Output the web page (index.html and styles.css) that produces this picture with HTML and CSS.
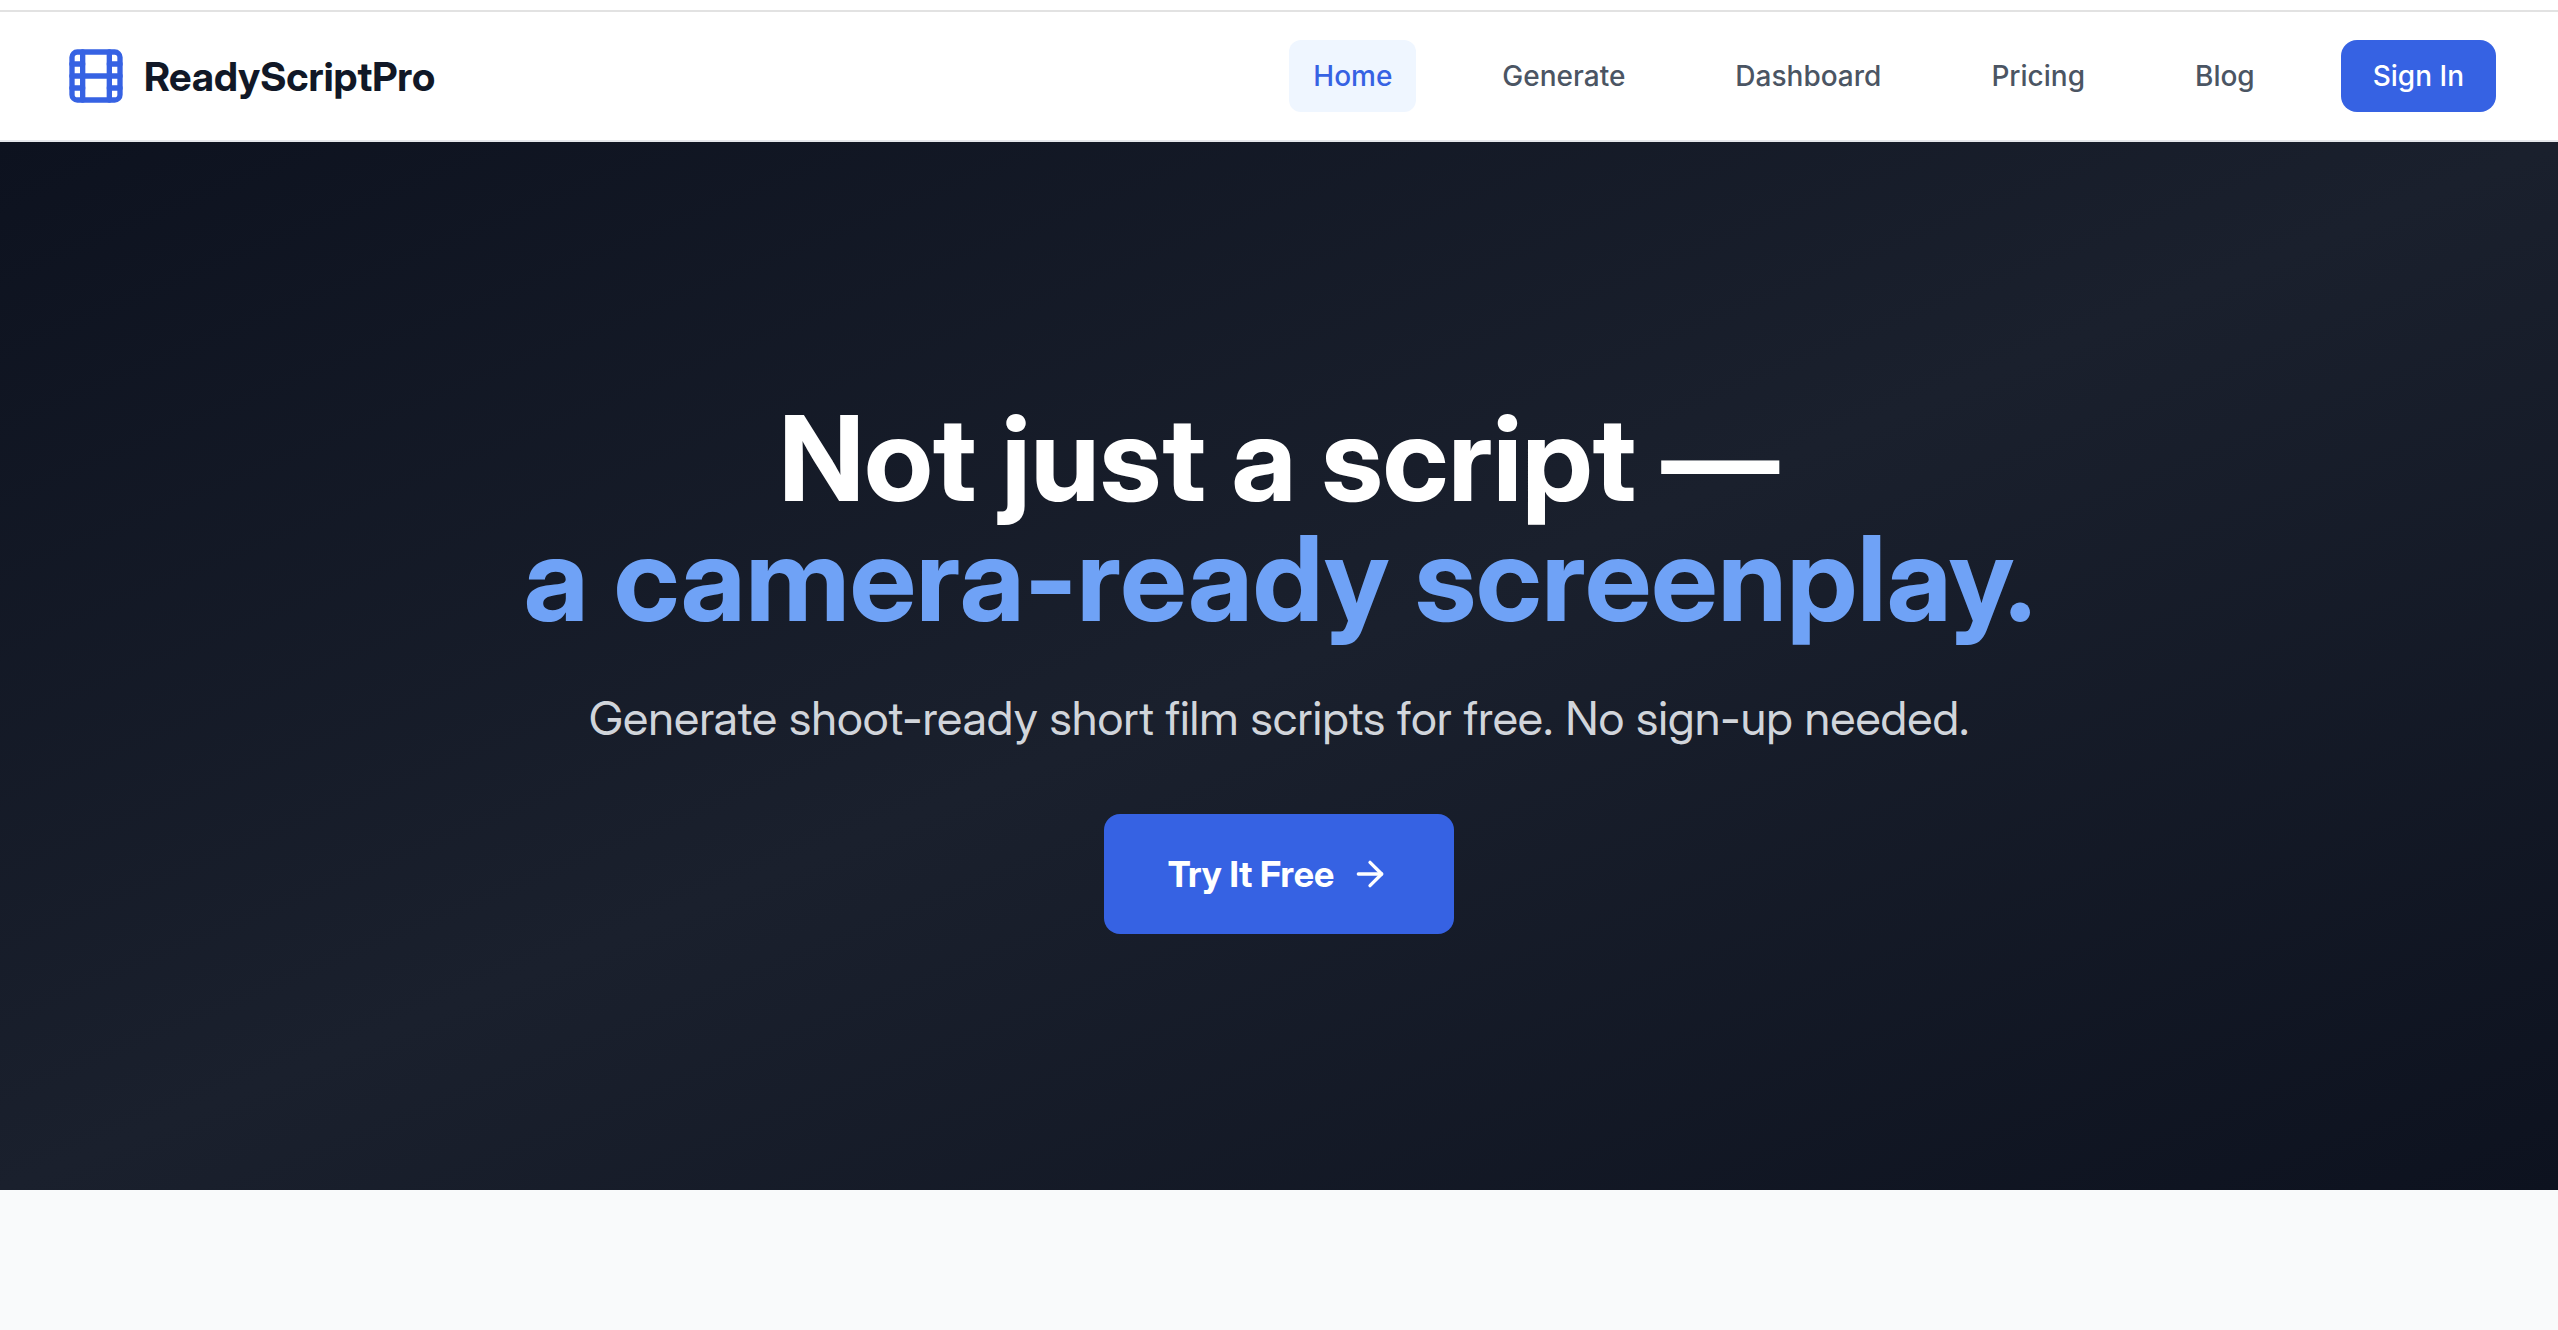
FILE: index.html
```html
<!DOCTYPE html>
<html lang="en">
<head>
    <meta charset="UTF-8">
    <meta name="viewport" content="width=device-width, initial-scale=1.0">
    <title>ReadyScriptPro</title>
    <link rel="stylesheet" href="styles.css">
</head>
<body>
    <div class="top-bar"></div>
    <header class="header">
        <a class="logo" href="#">
            <svg class="logo-icon" viewBox="0 0 24 24" aria-hidden="true">
                <rect width="18" height="18" x="3" y="3" rx="2"/>
                <path d="M7 3v18"/>
                <path d="M3 7.5h4"/>
                <path d="M3 12h18"/>
                <path d="M3 16.5h4"/>
                <path d="M17 3v18"/>
                <path d="M17 7.5h4"/>
                <path d="M17 16.5h4"/>
            </svg>
            <span>ReadyScriptPro</span>
        </a>
        <nav class="nav">
            <a class="nav-link active" href="#">Home</a>
            <a class="nav-link" href="#">Generate</a>
            <a class="nav-link" href="#">Dashboard</a>
            <a class="nav-link" href="#">Pricing</a>
            <a class="nav-link" href="#">Blog</a>
        </nav>
        <button class="sign-in" type="button">Sign In</button>
    </header>
    <main>
        <section class="hero">
            <h1>Not just a script —<br><span class="highlight">a camera-ready screenplay.</span></h1>
            <p>Generate shoot-ready short film scripts for free. No sign-up needed.</p>
            <a class="cta" href="#">
                Try It Free
                <svg class="cta-icon" viewBox="0 0 24 24" aria-hidden="true">
                    <path d="M5 12h14"/>
                    <path d="m12 5 7 7-7 7"/>
                </svg>
            </a>
        </section>
    </main>
</body>
</html>
```
FILE: styles.css
```css
* {
    box-sizing: border-box;
}
body {
    margin: 0;
    font-family: "Inter Display", Inter, "Liberation Sans", sans-serif;
    background-color: #f9fafb;
}
a {
    text-decoration: none;
}
svg {
    fill: none;
    stroke: currentColor;
    stroke-width: 2;
    stroke-linecap: round;
    stroke-linejoin: round;
}

/* Header */
.top-bar {
    height: 12px;
    background-color: #ffffff;
    border-bottom: 2px solid #e2e2e2;
}
.header {
    display: flex;
    align-items: center;
    gap: 62px;
    padding: 28px 62px 28px 64px;
    background-color: #ffffff;
    border-bottom: 2px solid #e5e7eb;
}
.logo {
    display: flex;
    align-items: center;
    gap: 16px;
    margin-right: auto;
    font-size: 40px;
    font-weight: 700;
    color: #111827;
}
.logo-icon {
    width: 64px;
    height: 64px;
    color: #3662e3;
}
.nav {
    display: flex;
    gap: 62px;
}
.nav-link, .sign-in {
    font-family: Inter, "Liberation Sans", sans-serif;
    font-size: 28px;
    line-height: 40px;
    font-weight: 500;
}
.nav-link {
    padding: 16px 24px;
    border-radius: 12px;
    color: #4b5563;
}
.nav-link.active {
    background-color: #eff6ff;
    color: #3662e3;
}
.sign-in {
    padding: 16px 32px;
    border: none;
    border-radius: 16px;
    background-color: #3662e3;
    color: #ffffff;
    cursor: pointer;
}

/* Hero */
.hero {
    padding: 256px 64px;
    text-align: center;
    background: linear-gradient(to bottom right, #0d121f, #1a202d, #0d121f);
}
.hero h1 {
    margin: 0 0 48px;
    font-size: 118px;
    line-height: 120px;
    font-weight: 700;
    color: #ffffff;
}
.highlight {
    color: #6fa2f6;
}
.hero p {
    margin: 0 0 64px;
    font-size: 47px;
    line-height: 64px;
    color: #d1d5db;
}
.cta {
    display: inline-flex;
    align-items: center;
    gap: 16px;
    padding: 32px 64px;
    border-radius: 16px;
    background-color: #3662e3;
    color: #ffffff;
    font-size: 36px;
    line-height: 56px;
    font-weight: 700;
    vertical-align: top;
}
.cta-icon {
    width: 40px;
    height: 40px;
}
```
